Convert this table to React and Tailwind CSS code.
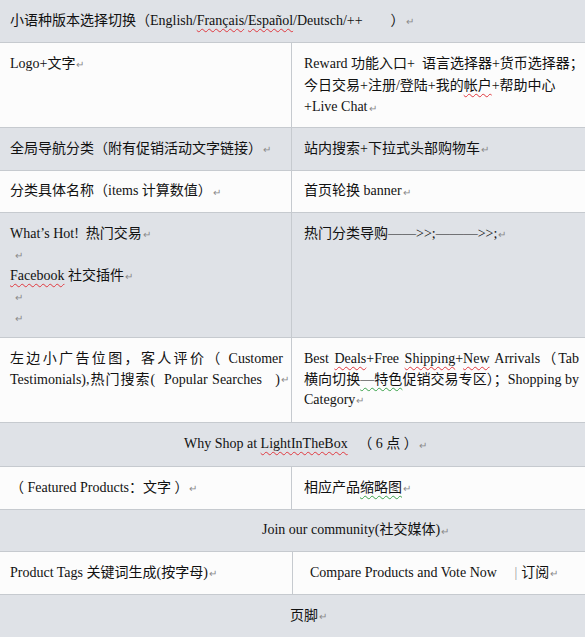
const P = () => <span className="ml-[1px] text-[10px] text-[#8a8a8a] align-middle">↵</span>

const Red = ({ children }) => (
  <span className="underline decoration-wavy decoration-[#e0383e] decoration-1 underline-offset-[3px]">{children}</span>
)

const Green = ({ children }) => (
  <span className="underline decoration-wavy decoration-[#3aa24a] decoration-1 underline-offset-[3px]">{children}</span>
)

const gray = 'bg-[#dfe2e7]'
const white = 'bg-[#fcfcfc]'

function Row({ bg, h, children }) {
  return <div className={`flex border-b border-[#c6cacf] ${bg} ${h}`}>{children}</div>
}

export default function App() {
  return (
    <div
      className="w-[585px] h-[637px] overflow-hidden bg-[#dfe2e7] text-[14px] leading-[21px] text-[#111]"
      style={{ fontFamily: '"Liberation Serif", "Noto Sans CJK SC", serif' }}
    >
      <Row bg={gray} h="h-[43px]">
        <div className="flex items-center pl-[10px] whitespace-nowrap">
          <span>小语种版本选择切换（English/<Red>Français</Red>/<Red>Español</Red>/Deutsch/++&nbsp;&nbsp;&nbsp;&nbsp;&nbsp;&nbsp;&nbsp;&nbsp;）<P /></span>
        </div>
      </Row>

      <Row bg={white} h="h-[85px]">
        <div className="w-[292px] shrink-0 border-r border-[#c6cacf] pl-[10px] pt-[10px]">
          Logo+文字<P />
        </div>
        <div className="flex-1 pl-[12px] pt-[10px] whitespace-nowrap">
          <div>Reward 功能入口+&nbsp; 语言选择器+货币选择器；<P /></div>
          <div>今日交易+注册/登陆+我的<Red>帐户</Red>+帮助中心</div>
          <div>+Live Chat<P /></div>
        </div>
      </Row>

      <Row bg={gray} h="h-[43px]">
        <div className="w-[292px] shrink-0 border-r border-[#c6cacf] pl-[10px] flex items-center">
          <span>全局导航分类（附有促销活动文字链接）<P /></span>
        </div>
        <div className="flex-1 pl-[12px] flex items-center">
          <span>站内搜索+下拉式头部购物车<P /></span>
        </div>
      </Row>

      <Row bg={white} h="h-[42px]">
        <div className="w-[292px] shrink-0 border-r border-[#c6cacf] pl-[10px] flex items-center">
          <span>分类具体名称（items 计算数值）<P /></span>
        </div>
        <div className="flex-1 pl-[12px] flex items-center">
          <span>首页轮换 banner<P /></span>
        </div>
      </Row>

      <Row bg={gray} h="h-[125px]">
        <div className="w-[292px] shrink-0 border-r border-[#c6cacf] pl-[10px] pt-[11px] leading-[20.5px]">
          <div>What’s Hot!&nbsp; 热门交易<P /></div>
          <div className="pl-[4px]"><P /></div>
          <div><Red>Facebook</Red>{' '}社交插件<P /></div>
          <div className="pl-[4px]"><P /></div>
          <div className="pl-[4px]"><P /></div>
        </div>
        <div className="flex-1 pl-[12px] pt-[11px] leading-[20.5px]">
          热门分类导购——&gt;&gt;;———&gt;&gt;;<P />
        </div>
      </Row>

      <Row bg={white} h="h-[85px]">
        <div className="w-[292px] shrink-0 border-r border-[#c6cacf] pl-[10px] pr-[8px] pt-[11px] leading-[20.5px]">
          <div className="text-justify [text-align-last:justify] whitespace-nowrap">左边小广告位图，客人评价（ Customer</div>
          <div className="text-justify [text-align-last:justify] whitespace-nowrap -mr-[6px]">Testimonials),热门搜索(&nbsp; Popular Searches &nbsp;&nbsp;)<P /></div>
        </div>
        <div className="flex-1 pl-[12px] pr-[6px] pt-[11px] leading-[20.5px]">
          <div className="text-justify [text-align-last:justify] whitespace-nowrap">Best <Red>Deals</Red>+Free <Red>Shipping</Red>+<Red>New</Red> Arrivals（Tab</div>
          <div className="text-justify [text-align-last:justify] whitespace-nowrap">横向切换<Green>—特色</Green>促销交易专区）；Shopping by</div>
          <div>Category<P /></div>
        </div>
      </Row>

      <Row bg={gray} h="h-[44px]">
        <div className="flex items-center pl-[184px] whitespace-nowrap">
          <span>Why Shop at <Red>LightInTheBox</Red>&nbsp;&nbsp; （ 6 点 ）<P /></span>
        </div>
      </Row>

      <Row bg={white} h="h-[43px]">
        <div className="w-[292px] shrink-0 border-r border-[#c6cacf] pl-[10px] flex items-center">
          <span>（ Featured Products：文字 ）<P /></span>
        </div>
        <div className="flex-1 pl-[12px] flex items-center">
          <span>相应产品<Green>缩略图</Green><P /></span>
        </div>
      </Row>

      <Row bg={gray} h="h-[42px]">
        <div className="flex items-center pl-[262px] whitespace-nowrap">
          <span>Join our community(社交媒体)<P /></span>
        </div>
      </Row>

      <Row bg={white} h="h-[43px]">
        <div className="w-[293px] shrink-0 border-r border-[#c6cacf] pl-[10px] flex items-center">
          <span>Product Tags 关键词生成(按字母)<P /></span>
        </div>
        <div className="flex-1 pl-[17px] flex items-center whitespace-nowrap">
          <span>Compare Products and Vote Now&nbsp;&nbsp;&nbsp;&nbsp; <span className="text-[#999] mr-[4px]">|</span>订阅<P /></span>
        </div>
      </Row>

      <div className={`flex items-center h-[42px] pl-[290px] ${gray}`}>
        <span>页脚<P /></span>
      </div>
    </div>
  )
}
